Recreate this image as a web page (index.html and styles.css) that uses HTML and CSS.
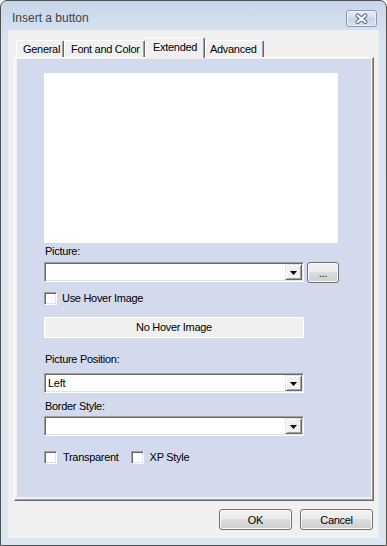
FILE: index.html
```html
<!DOCTYPE html>
<html lang="en">
<head>
<meta charset="UTF-8" />
<title>Insert a button</title>
<link rel="stylesheet" href="styles.css">
</head>
<body>

<div class="window">
  <div class="titlebar">
    <span class="title">Insert a button</span>
    <button class="close" aria-label="Close">
      <svg width="29" height="15" viewBox="0 0 29 15">
        <path d="M10.5 4.5 L18.5 11 M18.5 4.5 L10.5 11" stroke="#66768a" stroke-width="4.2" stroke-linecap="round" fill="none"/>
        <path d="M10.5 4.5 L18.5 11 M18.5 4.5 L10.5 11" stroke="#ffffff" stroke-width="2" stroke-linecap="round" fill="none"/>
      </svg>
    </button>
  </div>

  <div class="client">
    <div class="tabs">
      <div class="tab tab-general">General</div>
      <div class="tab tab-font">Font and Color</div>
      <div class="tab tab-extended active">Extended</div>
      <div class="tab tab-advanced">Advanced</div>
    </div>

    <div class="panel">
      <div class="page">
        <div class="preview"></div>

        <div class="label label-picture">Picture:</div>
        <div class="row">
          <div class="combo">
            <span class="value"></span>
            <span class="drop"><svg width="7" height="4" viewBox="0 0 7 4"><polygon points="0,0 7,0 3.5,4" fill="#000"/></svg></span>
          </div>
          <button class="btn browse">...</button>
        </div>

        <div class="check check-hover"><span class="box"></span>Use Hover Image</div>

        <div class="hover-box">No Hover Image</div>

        <div class="label label-position">Picture Position:</div>
        <div class="combo combo-position">
          <span class="value">Left</span>
          <span class="drop"><svg width="7" height="4" viewBox="0 0 7 4"><polygon points="0,0 7,0 3.5,4" fill="#000"/></svg></span>
        </div>

        <div class="label label-border">Border Style:</div>
        <div class="combo combo-border">
          <span class="value"></span>
          <span class="drop"><svg width="7" height="4" viewBox="0 0 7 4"><polygon points="0,0 7,0 3.5,4" fill="#000"/></svg></span>
        </div>

        <div class="checks">
          <div class="check check-transparent"><span class="box"></span>Transparent</div>
          <div class="check"><span class="box"></span>XP Style</div>
        </div>
      </div>
    </div>

    <div class="footer">
      <button class="btn dialog-btn">OK</button>
      <button class="btn dialog-btn">Cancel</button>
    </div>
  </div>
</div>

</body>
</html>
```

FILE: styles.css
```css
body {
  margin: 0;
  font-family: "Liberation Sans", Arial, sans-serif;
  font-size: 11px;
  letter-spacing: -0.3px;
  color: #000;
}
.window {
  width: 387px;
  height: 546px;
  box-sizing: border-box;
  border: 1px solid #505050;
  border-radius: 7px 7px 0 0;
  background: linear-gradient(#c7d6e8, #d9e5f2 40px, #dbe6f3);
  display: flex;
  flex-direction: column;
  overflow: hidden;
}
.titlebar {
  height: 29px;
  display: flex;
  align-items: flex-start;
  justify-content: space-between;
  padding: 0 9px 0 11px;
}
.title {
  font-size: 12px;
  letter-spacing: 0;
  color: #444;
  margin-top: 10px;
  line-height: 15px;
}
.close {
  margin-top: 9px;
  width: 31px;
  height: 17px;
  padding: 0;
  border: 1px solid #8d9bb0;
  border-radius: 3px;
  background: linear-gradient(#e4ecf6, #d3deec 50%, #c9d6e7 50%, #d6e1ef);
  box-shadow: inset 0 0 0 1px rgba(255,255,255,0.55);
  display: flex;
  align-items: center;
  justify-content: center;
}
.close svg {
  display: block;
}
.client {
  flex: 1;
  margin: 0 7px 7px 7px;
  background: #f0f0f0;
  padding: 7px 5px 0 6px;
  display: flex;
  flex-direction: column;
}

/* tab strip */
.tabs {
  height: 20px;
  display: flex;
  align-items: flex-end;
  padding-left: 2px;
}
.tab {
  box-sizing: border-box;
  height: 17px;
  line-height: 16px;
  border-top: 1px solid #fff;
  border-left: 1px solid #fff;
  border-right: 1px solid #696969;
  border-radius: 2px 2px 0 0;
  box-shadow: inset -1px 0 #a0a0a0;
  padding-left: 6px;
  background: #f0f0f0;
  white-space: nowrap;
  overflow: hidden;
}
.tab-general { width: 48px; }
.tab-font { width: 81px; }
.tab-extended { width: 60px; }
.tab-advanced { width: 59px; padding-left: 4px; }
.tab.active {
  height: 21px;
  margin-bottom: -1px;
  position: relative;
  z-index: 1;
  line-height: 18px;
  padding-left: 7px;
}

/* page */
.panel {
  height: 444px;
  box-sizing: border-box;
  border-top: 1px solid #fff;
  border-left: 1px solid #fff;
  border-right: 1px solid #696969;
  border-bottom: 1px solid #696969;
  box-shadow: inset -1px -1px #a0a0a0;
  background: #f0f0f0;
  padding: 1px 2px 3px 2px;
  display: flex;
}
.page {
  flex: 1;
  background: #d3daee;
  padding: 14px 0 0 27px;
}
.preview {
  width: 294px;
  height: 170px;
  background: #fff;
}
.label {
  line-height: 13px;
  height: 13px;
  padding-left: 1px;
}
.label-picture { margin-top: 2px; }
.label-position { margin-top: 15px; }
.label-border { margin-top: 7px; }

.row {
  margin-top: 4px;
  display: flex;
  gap: 3px;
}
.combo {
  box-sizing: border-box;
  width: 260px;
  height: 20px;
  background: #fff;
  border-top: 1px solid #a0a0a0;
  border-left: 1px solid #a0a0a0;
  border-right: 1px solid #fff;
  border-bottom: 1px solid #fff;
  box-shadow: inset 1px 1px #696969, inset -1px -1px #e3e3e3;
  display: flex;
  align-items: center;
  padding: 0 1px 0 3px;
}
.combo .value {
  flex: 1;
  line-height: 13px;
}
.combo-position { margin-top: 7px; }
.combo-border { margin-top: 3px; }
.drop {
  box-sizing: border-box;
  width: 17px;
  height: 16px;
  background: #f0f0f0;
  border-top: 1px solid #e3e3e3;
  border-left: 1px solid #e3e3e3;
  border-right: 1px solid #696969;
  border-bottom: 1px solid #696969;
  box-shadow: inset 1px 1px #fff, inset -1px -1px #a0a0a0;
  display: flex;
  align-items: center;
  justify-content: center;
}
.drop svg {
  display: block;
  margin-top: 1px;
}

/* aero buttons */
.btn {
  box-sizing: border-box;
  font-family: "Liberation Sans", Arial, sans-serif;
  font-size: 11px;
  letter-spacing: -0.3px;
  color: #000;
  border: 1px solid #707070;
  border-radius: 3px;
  background: linear-gradient(#f2f2f2, #ebebeb 45%, #dddddd 50%, #cfcfcf);
  box-shadow: inset 0 0 0 1px #fafafa;
  padding: 0;
}
.browse {
  width: 32px;
  height: 21px;
  line-height: 15px;
  padding-top: 2px;
}

/* checkboxes */
.check {
  display: flex;
  align-items: center;
  gap: 6px;
  height: 13px;
  line-height: 13px;
}
.box {
  box-sizing: border-box;
  width: 13px;
  height: 13px;
  background: #fff;
  border-top: 1px solid #a0a0a0;
  border-left: 1px solid #a0a0a0;
  border-right: 1px solid #fff;
  border-bottom: 1px solid #fff;
  box-shadow: inset 1px 1px #696969, inset -1px -1px #e3e3e3;
}
.check-hover {
  margin-top: 9px;
  gap: 5px;
}
.hover-box {
  box-sizing: border-box;
  margin-top: 12px;
  width: 260px;
  height: 21px;
  line-height: 19px;
  border: 1px solid #fff;
  background: #f0f0f0;
  text-align: center;
}
.checks {
  margin-top: 15px;
  display: flex;
  gap: 12px;
}

/* footer */
.footer {
  margin-top: 8px;
  display: flex;
  justify-content: flex-end;
  gap: 8px;
  padding-right: 1px;
}
.dialog-btn {
  width: 73px;
  height: 21px;
}
```
